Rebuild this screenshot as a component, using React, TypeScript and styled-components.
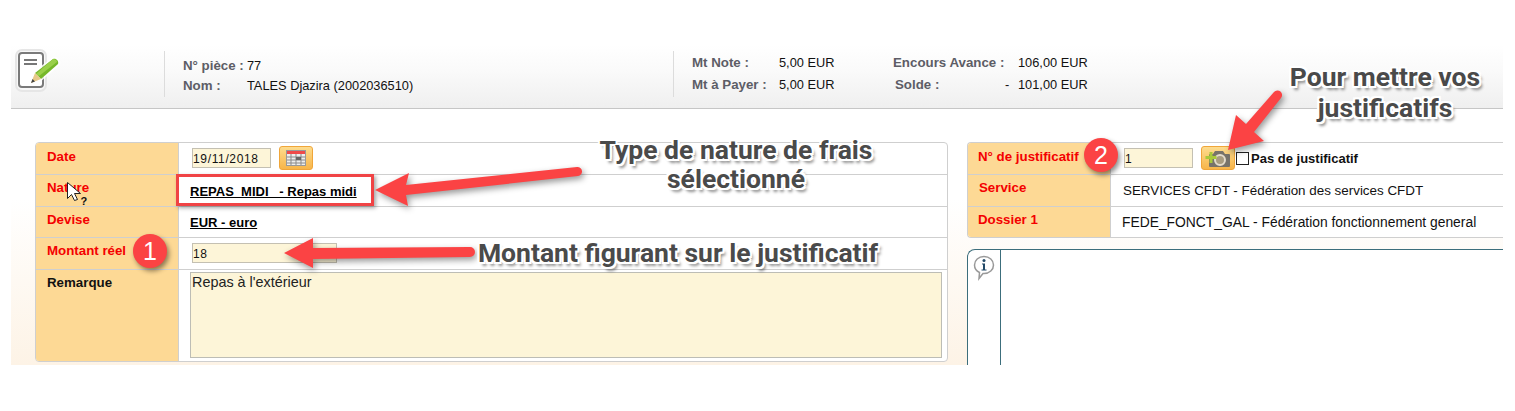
import React from 'react';
import styled, { createGlobalStyle } from 'styled-components';

const GlobalStyle = createGlobalStyle`
  html, body {
    margin: 0;
    padding: 0;
    background: #fff;
    overflow: hidden;
  }
  body {
    font-family: "Liberation Sans", Arial, sans-serif;
    font-size: 12.8px;
    color: #000;
  }
`;

const Page = styled.div`
  position: relative;
  width: 1515px;
  height: 411px;
  padding: 45px 12px 0 11px;
  box-sizing: border-box;
`;

const Header = styled.header`
  display: flex;
  height: 63px;
  background: linear-gradient(#fff 0%, #fafafa 40%, #efefef 100%);
  border-bottom: 1px solid #c6c6c6;
`;

const LogoCell = styled.div`
  width: 153px;
  padding: 4px 0 0 4px;
  box-sizing: border-box;
`;

const HeaderBlock = styled.div<{ $width: number; $top: number; $line: number }>`
  width: ${(p) => p.$width}px;
  margin-top: 6px;
  height: 46px;
  padding: ${(p) => p.$top}px 0 0 18px;
  box-sizing: border-box;
  border-left: 1px solid #dcdcdc;
  line-height: 15px;

  & > div {
    height: ${(p) => p.$line}px;
  }
`;

const InfoLine = styled.div`
  display: flex;
`;

const InfoLabel = styled.span<{ $width: number; $indent?: number }>`
  width: ${(p) => p.$width}px;
  padding-left: ${(p) => p.$indent ?? 0}px;
  box-sizing: border-box;
  font-size: 13.3px;
  font-weight: bold;
  color: #5d5d66;
  flex: none;
  white-space: nowrap;
`;

const InfoValue = styled.span<{ $width?: number }>`
  flex: none;
  width: ${(p) => (p.$width ? `${p.$width}px` : 'auto')};
  color: #111;
`;

const Main = styled.main`
  display: flex;
  align-items: flex-start;
  gap: 19px;
  height: 256px;
  padding: 33px 0 0 24px;
  box-sizing: border-box;
  background: linear-gradient(#fff 0%, #fff 35%, #fdf3e6 100%);
  overflow: hidden;
`;

const LeftColumn = styled.section`
  width: 913px;
  flex: none;
`;

const RightColumn = styled.section`
  flex: 1;
  min-width: 0;
`;

const Panel = styled.div<{ $open?: boolean }>`
  border: 1px solid #cfcfcf;
  border-right: ${(p) => (p.$open ? 'none' : '1px solid #cfcfcf')};
  border-radius: ${(p) => (p.$open ? '4px 0 0 4px' : '4px')};
  overflow: hidden;
  background: #fff;
`;

const Row = styled.div<{ $height: number; $labelWidth: number }>`
  display: grid;
  grid-template-columns: ${(p) => p.$labelWidth}px 1fr;
  height: ${(p) => p.$height}px;
  border-top: 1px solid #cfcfcf;
  box-sizing: border-box;
  &:first-child {
    border-top: none;
  }
`;

const Label = styled.div<{ $dark?: boolean; $indent?: number; $top?: number }>`
  background: #fdd995;
  border-right: 1px solid #cfcfcf;
  padding: ${(p) => p.$top ?? 5}px 0 0 ${(p) => p.$indent ?? 11}px;
  font-size: 13.3px;
  font-weight: bold;
  line-height: 16px;
  white-space: nowrap;
  color: ${(p) => (p.$dark ? '#111' : '#f40000')};
`;

const Value = styled.div<{ $indent?: number }>`
  display: flex;
  align-items: center;
  padding-left: ${(p) => p.$indent ?? 11}px;
`;

const TopValue = styled(Value)`
  align-items: flex-start;
  padding: 2px 0 0 11px;
`;

const LinkText = styled.a`
  font-size: 13px;
  font-weight: bold;
  color: #000;
  text-decoration: underline;
  text-decoration-skip-ink: none;
  padding-top: 1px;
`;

const Plain = styled.span<{ $size: number }>`
  font-size: ${(p) => p.$size}px;
  color: #111;
`;

const Field = styled.input<{ $width: number }>`
  width: ${(p) => p.$width}px;
  height: 20px;
  margin-bottom: 2px;
  box-sizing: border-box;
  padding: 2px 0 0 0;
  border: 1px solid #c4c0b2;
  background: #fdf5d8;
  font-family: "Liberation Sans", Arial, sans-serif;
  font-size: 12px;
  letter-spacing: 0.65px;
  color: #111;
  outline: none;
  border-radius: 0;
`;

const Memo = styled.textarea`
  width: 752px;
  height: 86px;
  box-sizing: border-box;
  padding: 1px 0 0 1px;
  border: 1px solid #bdbdb5;
  background: #fdf5d8;
  font-family: "Liberation Sans", Arial, sans-serif;
  font-size: 14.4px;
  line-height: 17px;
  color: #222;
  resize: none;
  outline: none;
`;

const IconButton = styled.button`
  width: 34px;
  height: 24px;
  margin: 0 0 2px 8px;
  padding: 0;
  display: flex;
  align-items: center;
  justify-content: center;
  border: 1px solid #f0a63a;
  border-radius: 3px;
  background: linear-gradient(#fddc8e, #f7b54a);
`;

const Check = styled.span`
  width: 13px;
  height: 13px;
  margin-left: 1px;
  border: 1px solid #222;
  background: #fff;
  box-sizing: border-box;
  flex: none;
`;

const CheckLabel = styled.span`
  margin-left: 2px;
  font-size: 13px;
  font-weight: bold;
  color: #111;
`;

const InfoBox = styled.div`
  display: flex;
  margin-top: 11px;
  height: 140px;
  border: 1px solid #3c6e7c;
  border-right: none;
  border-bottom: none;
  border-radius: 8px 0 0 0;
  background: #fff;
`;

const InfoIconCell = styled.div`
  width: 33px;
  padding: 5px 0 0 5px;
  box-sizing: border-box;
  border-right: 1px solid #3c6e7c;
`;

const Callout = styled.div<{ $left: number; $top: number; $width: number; $line?: number }>`
  position: absolute;
  left: ${(p) => p.$left}px;
  top: ${(p) => p.$top}px;
  width: ${(p) => p.$width}px;
  text-align: center;
  font-family: Roboto, sans-serif;
  font-weight: 700;
  font-size: 26.5px;
  line-height: ${(p) => p.$line ?? 29}px;
  color: #4a4a4a;
  white-space: nowrap;
  text-shadow:
    -2px 0 0 #fff, 2px 0 0 #fff, 0 -2px 0 #fff, 0 2px 0 #fff,
    -2px -2px 0 #fff, 2px -2px 0 #fff, -2px 2px 0 #fff, 2px 2px 0 #fff,
    3px 4px 3px rgba(0, 0, 0, 0.45);
`;

const Badge = styled.div<{ $left: number; $top: number }>`
  position: absolute;
  left: ${(p) => p.$left}px;
  top: ${(p) => p.$top}px;
  width: 34px;
  height: 34px;
  border-radius: 50%;
  background: #fb4344;
  color: #fff;
  font-size: 25px;
  line-height: 34px;
  text-align: center;
  box-shadow: 2px 3px 5px rgba(0, 0, 0, 0.45);
`;

const Highlight = styled.div`
  position: absolute;
  left: 176px;
  top: 174px;
  width: 198px;
  height: 32px;
  box-sizing: border-box;
  border: 3px solid #f04345;
  box-shadow: 2px 2px 4px rgba(0, 0, 0, 0.35);
`;

const ArrowLayer = styled.svg`
  position: absolute;
  left: 0;
  top: 0;
  pointer-events: none;
  filter: drop-shadow(2px 3px 3px rgba(0, 0, 0, 0.4));
`;

const CursorMark = styled.svg`
  position: absolute;
  left: 66px;
  top: 181px;
`;

const NoteIcon = () => (
  <svg width="48" height="44" viewBox="0 0 48 44">
    <rect x="1" y="1" width="30" height="41" rx="6" fill="#f8f8f8" stroke="#e6e6e6" strokeWidth="2" />
    <rect x="4" y="4" width="24" height="34" rx="3" fill="#fff" stroke="#7a7a7a" strokeWidth="2" />
    <path d="M9 11h13M9 15h13" stroke="#777" strokeWidth="2" />
    <path d="M13 33l4-9L38 8c3-2 9 4 7 8L25 33z" fill="#fff" opacity="0.85" />
    <path d="M20 24L38 10c3-1 6 2 5 5L26 30z" fill="#76b82a" />
    <path d="M38 10c2 0 4 1 4 3L24 27l-3-2z" fill="#9ad04a" />
    <path d="M20 24l6 6-10 4z" fill="#e8c98a" />
    <path d="M16 34l1.500-4 2.500 2.500z" fill="#444" />
  </svg>
);

const CalendarIcon = () => (
  <svg width="20" height="16" viewBox="0 0 20 16">
    <rect x="0.5" y="0.5" width="19" height="15" fill="#eee" stroke="#999" />
    <rect x="1" y="1" width="18" height="3" fill="#ef4a4a" />
    <path d="M1 7h18M1 10h18M1 13h18M5 4v11M10 4v11M15 4v11" stroke="#8a8a8a" />
    <rect x="10" y="7" width="5" height="3" fill="#666" />
  </svg>
);

const CameraIcon = () => (
  <svg width="28" height="20" viewBox="0 0 28 20">
    <path d="M6 6h3l2-3h8l2 3h4a1 1 0 0 1 1 1v11a1 1 0 0 1-1 1H6a1 1 0 0 1-1-1V7a1 1 0 0 1 1-1z" fill="#77736a" />
    <circle cx="16" cy="12" r="5" fill="#a89c80" stroke="#e4dccb" strokeWidth="2" />
    <path d="M7 4v11M1.500 9.500h11" stroke="#a9c93a" strokeWidth="3" />
  </svg>
);

const InfoBubble = () => (
  <svg width="22" height="26" viewBox="0 0 22 26">
    <path d="M11 1.500c5.500 0 9.500 3.800 9.500 8.500s-4 8.500-9.500 8.500l-1 0-4 5 .5-6C3.500 16 1.500 13.300 1.500 10 1.500 5.300 5.500 1.500 11 1.500z" fill="#fff" stroke="#999" strokeWidth="1.500" />
    <circle cx="11" cy="5.500" r="1.500" fill="#234a68" />
    <path d="M9 8.500h3v6h1.500v1h-5v-1H10v-5H9z" fill="#234a68" />
  </svg>
);

export default function App() {
  return (
    <>
      <GlobalStyle />
      <Page>
        <Header>
          <LogoCell>
            <NoteIcon />
          </LogoCell>
          <HeaderBlock $width={509} $top={7} $line={20}>
            <InfoLine>
              <InfoLabel $width={64}>N° pièce :</InfoLabel>
              <InfoValue>77</InfoValue>
            </InfoLine>
            <InfoLine>
              <InfoLabel $width={64}>Nom :</InfoLabel>
              <InfoValue>TALES Djazira (2002036510)</InfoValue>
            </InfoLine>
          </HeaderBlock>
          <HeaderBlock $width={500} $top={4} $line={22}>
            <InfoLine>
              <InfoLabel $width={87}>Mt Note :</InfoLabel>
              <InfoValue $width={114}>5,00 EUR</InfoValue>
              <InfoLabel $width={125}>Encours Avance :</InfoLabel>
              <InfoValue>106,00 EUR</InfoValue>
            </InfoLine>
            <InfoLine>
              <InfoLabel $width={87}>Mt à Payer :</InfoLabel>
              <InfoValue $width={114}>5,00 EUR</InfoValue>
              <InfoLabel $width={112} $indent={2}>Solde :</InfoLabel>
              <InfoValue $width={13}>-</InfoValue>
              <InfoValue>101,00 EUR</InfoValue>
            </InfoLine>
          </HeaderBlock>
        </Header>

        <Main>
          <LeftColumn>
            <Panel>
              <Row $height={31} $labelWidth={143}>
                <Label $top={6}>Date</Label>
                <Value $indent={13}>
                  <Field $width={79} readOnly defaultValue="19/11/2018" />
                  <IconButton type="button"><CalendarIcon /></IconButton>
                </Value>
              </Row>
              <Row $height={32} $labelWidth={143}>
                <Label>Nature</Label>
                <Value><LinkText>REPAS_MIDI_ - Repas midi</LinkText></Value>
              </Row>
              <Row $height={31} $labelWidth={143}>
                <Label>Devise</Label>
                <Value><LinkText>EUR - euro</LinkText></Value>
              </Row>
              <Row $height={32} $labelWidth={143}>
                <Label>Montant réel</Label>
                <Value $indent={13}><Field $width={145} readOnly defaultValue="18" /></Value>
              </Row>
              <Row $height={92} $labelWidth={143}>
                <Label $dark>Remarque</Label>
                <TopValue><Memo readOnly defaultValue="Repas à l'extérieur" /></TopValue>
              </Row>
            </Panel>
          </LeftColumn>

          <RightColumn>
            <Panel $open>
              <Row $height={31} $labelWidth={143}>
                <Label $indent={10} $top={6}>N° de justificatif</Label>
                <Value $indent={13}>
                  <Field $width={69} readOnly defaultValue="1" />
                  <IconButton type="button"><CameraIcon /></IconButton>
                  <Check />
                  <CheckLabel>Pas de justificatif</CheckLabel>
                </Value>
              </Row>
              <Row $height={32} $labelWidth={143}>
                <Label>Service</Label>
                <Value $indent={12}><Plain $size={13.4}>SERVICES CFDT - Fédération des services CFDT</Plain></Value>
              </Row>
              <Row $height={31} $labelWidth={143}>
                <Label $indent={10}>Dossier 1</Label>
                <Value><Plain $size={13.85}>FEDE_FONCT_GAL - Fédération fonctionnement general</Plain></Value>
              </Row>
            </Panel>
            <InfoBox>
              <InfoIconCell><InfoBubble /></InfoIconCell>
            </InfoBox>
          </RightColumn>
        </Main>

        <Highlight />
        <ArrowLayer width="1515" height="411" viewBox="0 0 1515 411">
          <g fill="#fb4344">
            <path d="M375 190L409 173L406 185L577 167a4.500 4.500 0 0 1 1 9L406 195L408 206z" />
            <path d="M284 253L313 238L313 248L470 247a5 5 0 0 1 0 10L313 259L313 268z" />
            <path d="M1228 150L1236 115L1246 124L1274 92a4.500 4.500 0 0 1 7 6L1254 132L1264 141z" />
          </g>
        </ArrowLayer>

        <Badge $left={133} $top={234}>1</Badge>
        <Badge $left={1084} $top={138}>2</Badge>

        <CursorMark width="22" height="26" viewBox="0 0 22 26">
          <path d="M1.500 1.500v16l4-4 3 6 3-1-3-6h6z" fill="#fff" stroke="#222" />
          <text x="14.500" y="24" fontSize="11" fontFamily="Liberation Sans" fontWeight="bold" fill="#111">?</text>
        </CursorMark>

        <Callout $left={586} $top={135} $width={300}>Type de nature de frais<br />sélectionné</Callout>
        <Callout $left={470} $top={238} $width={416} $line={30}>Montant figurant sur le justificatif</Callout>
        <Callout $left={1270} $top={61} $width={230} $line={31}>Pour mettre vos<br />justificatifs</Callout>
      </Page>
    </>
  );
}
